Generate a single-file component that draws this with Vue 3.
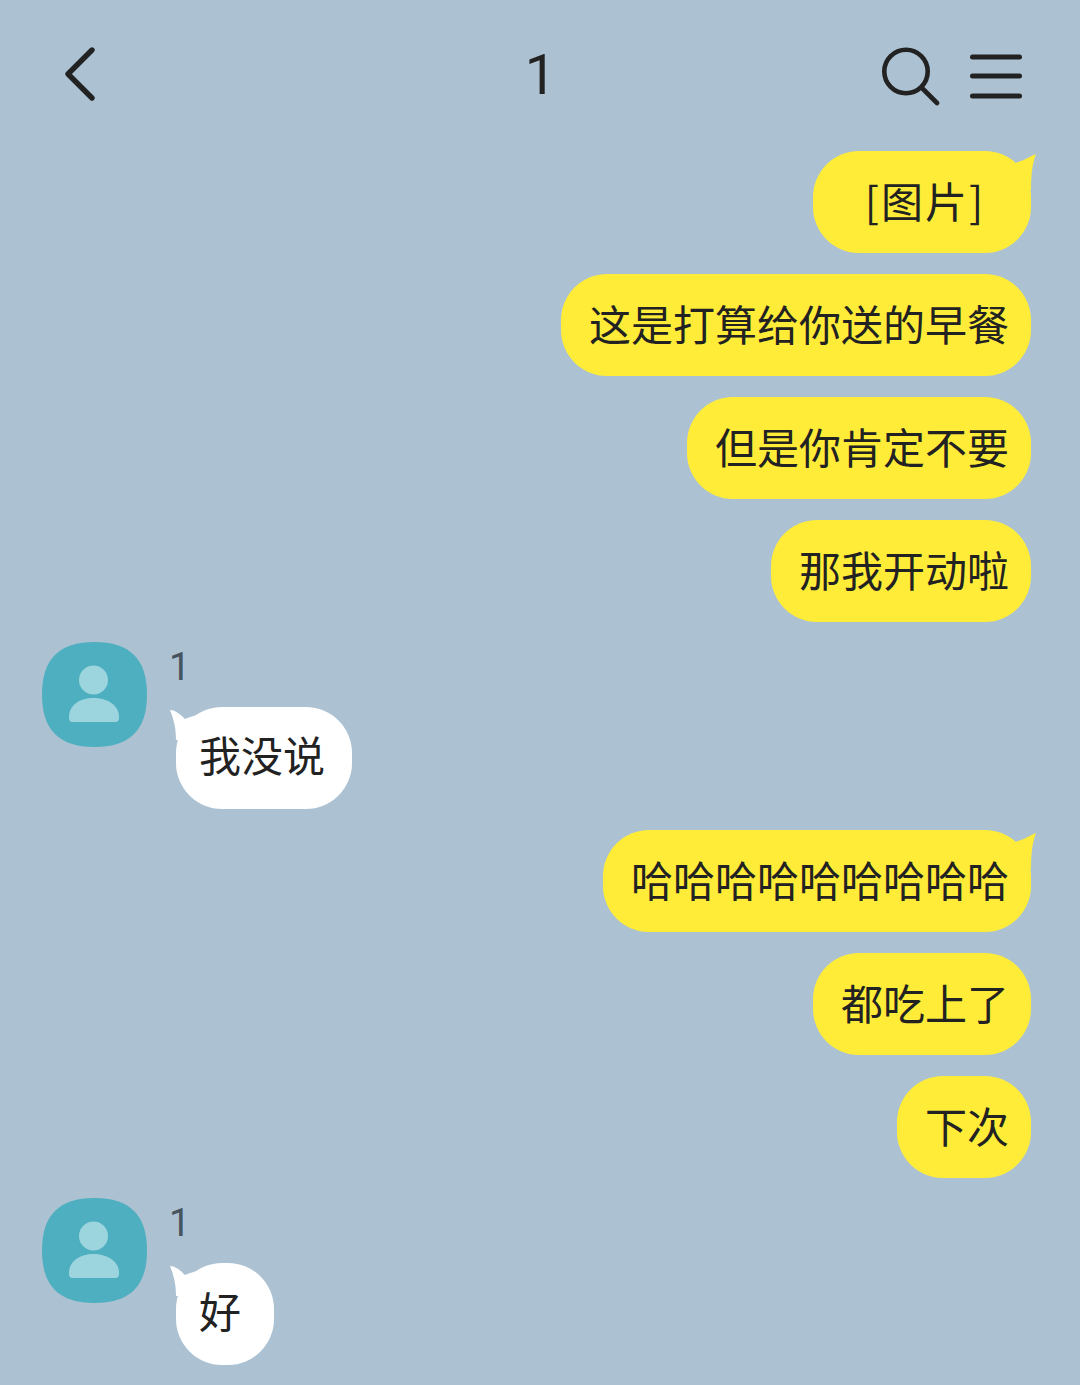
<script setup>
const items = [
  { me: true, text: '[图片]', tail: true, wide: true },
  { me: true, text: '这是打算给你送的早餐' },
  { me: true, text: '但是你肯定不要' },
  { me: true, text: '那我开动啦' },
  { me: false, text: '我没说' },
  { me: true, text: '哈哈哈哈哈哈哈哈哈', tail: true },
  { me: true, text: '都吃上了' },
  { me: true, text: '下次' },
  { me: false, text: '好' },
]
</script>

<template>
  <div class="page">
    <header class="bar">
      <svg class="back" width="34" height="58" viewBox="0 0 34 58">
        <path d="M29 4 L5 28 L29 52" fill="none" stroke="#222" stroke-width="5.4" stroke-linecap="round" stroke-linejoin="round" />
      </svg>
      <div class="title">1</div>
      <div class="tools">
        <svg width="60" height="60" viewBox="0 0 60 60">
          <circle cx="25" cy="25.5" r="21.7" fill="none" stroke="#222" stroke-width="4.6" />
          <path d="M41 42 L56 57" stroke="#222" stroke-width="4.6" stroke-linecap="round" />
        </svg>
        <svg width="54" height="48" viewBox="0 0 54 48">
          <path d="M2.5 4 H49.5 M2.5 23 H49.5 M2.5 43 H49.5" stroke="#222" stroke-width="5" stroke-linecap="round" />
        </svg>
      </div>
    </header>

    <main class="list">
      <template v-for="(m, i) in items" :key="i">
        <div v-if="m.me" class="out">
          <div class="bubble yellow" :class="{ wide: m.wide }">
            <svg v-if="m.tail" class="tail-r" width="30" height="40" viewBox="0 0 30 40">
              <path d="M6 12 C9 9 11 8 12 8 C19 6 25 2 30 0 C27 8 25 18 25 36 L6 36 Z" fill="#ffec38" />
            </svg>
            {{ m.text }}
          </div>
        </div>
        <div v-else class="in">
          <svg class="avatar" width="105" height="105" viewBox="0 0 105 105">
            <path d="M52.5 0 C88 0 105 17 105 52.5 C105 88 88 105 52.5 105 C17 105 0 88 0 52.5 C0 17 17 0 52.5 0 Z" fill="#4dafbf" />
            <circle cx="51.5" cy="38" r="14.5" fill="#9dd5df" />
            <path d="M27 75 C27 63 38 56 51.5 56 C65 56 77 63 77 75 C77 79 76 80 73 80 H31 C28 80 27 79 27 75 Z" fill="#9dd5df" />
          </svg>
          <div class="col">
            <div class="name">1</div>
            <div class="bubble white">
              <svg class="tail-l" width="30" height="30" viewBox="0 0 30 30">
                <path d="M0 0 C6 0 12 6 15 9 C18 8 22 6 27 5 L27 30 L6 30 C6 16 3 8 0 0 Z" fill="#fff" />
              </svg>
              {{ m.text }}
            </div>
          </div>
        </div>
      </template>
    </main>
  </div>
</template>

<style scoped>
.page {
  width: 1080px;
  height: 1385px;
  overflow: hidden;
  background: #acc2d2;
  font-family: "Noto Sans CJK SC", "Noto Sans", sans-serif;
  color: #222;
}
.bar {
  height: 151px;
  box-sizing: border-box;
  padding: 46px 56px 0 63px;
  display: grid;
  grid-template-columns: 1fr auto 1fr;
  align-items: start;
}
.back { display: block; }
.title {
  font-family: "Roboto", sans-serif;
  font-size: 56px;
  line-height: 58px;
  font-weight: 400;
  transform: translateX(-3px);
}
.tools {
  justify-self: end;
  display: flex;
  gap: 29px;
  align-items: flex-start;
}
.tools svg:last-child { margin-top: 7px; }
.list {
  display: flex;
  flex-direction: column;
  gap: 21px;
  padding-right: 49px;
}
.out { display: flex; justify-content: flex-end; }
.in {
  display: flex;
  align-items: flex-start;
  padding-left: 42px;
  margin-top: -1px;
}
.avatar { flex: none; display: block; }
.col {
  margin-left: 29px;
  display: flex;
  flex-direction: column;
  align-items: flex-start;
}
.name {
  height: 65px;
  margin-left: -7px;
  font-family: "Roboto", sans-serif;
  font-size: 38px;
  line-height: 50px;
  font-weight: 400;
  color: #46545f;
}
.bubble {
  position: relative;
  height: 102px;
  box-sizing: border-box;
  border-radius: 46px;
  font-size: 42px;
  line-height: 98px;
  white-space: nowrap;
}
.yellow { background: #ffec38; padding: 0 22px 0 28px; }
.white { background: #fff; padding: 0 27px 0 23px; min-width: 98px; line-height: 94px; }
.wide { width: 218px; text-align: center; padding: 0 0 0 6px; letter-spacing: 2px; }
.tail-r { position: absolute; top: 3px; right: -5px; }
.tail-l { position: absolute; top: 3px; left: -6px; }
</style>
